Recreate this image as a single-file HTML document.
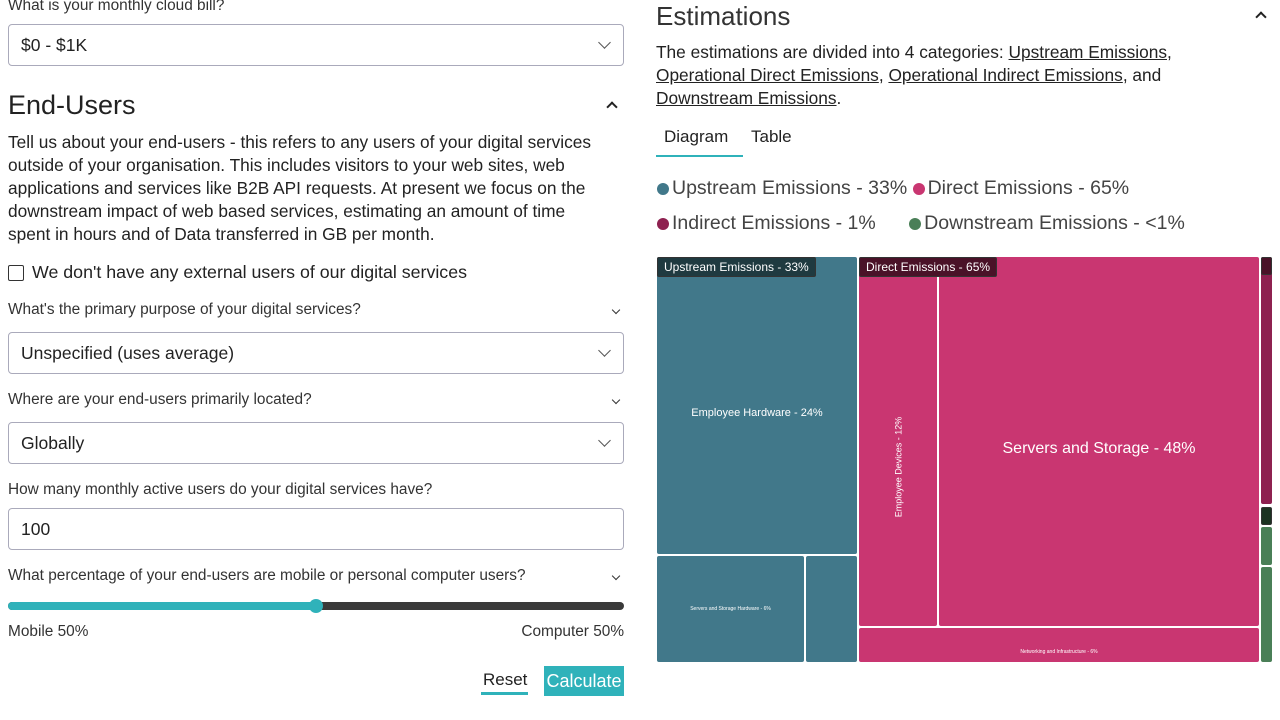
<!DOCTYPE html>
<html><head><meta charset="utf-8"><style>
*{box-sizing:border-box;margin:0;padding:0}
body{width:1280px;height:720px;overflow:hidden;background:#fff;font-family:"Liberation Sans",sans-serif;color:#222;position:relative}
.a{position:absolute;white-space:nowrap}
.t{font-size:17.3px;letter-spacing:0}
.sel{position:absolute;left:8px;width:616px;height:42px;border:1px solid #aab;border-radius:4px;font-size:17.5px;padding:0 12px;line-height:40px}
.chev{position:absolute;right:14px;top:13px;width:9px;height:9px;border-right:1.5px solid #555;border-bottom:1.5px solid #555;transform:rotate(45deg)}
.lab{font-size:15.4px;color:#333}
.smch{position:absolute;left:613px;width:6px;height:6px;border-right:1.5px solid #333;border-bottom:1.5px solid #333;transform:rotate(45deg)}
.up{position:absolute;width:8px;height:8px;border-left:2px solid #222;border-top:2px solid #222;transform:rotate(45deg)}
.b{position:absolute;border-radius:2px;color:#fff;display:flex;align-items:center;justify-content:center;overflow:hidden;white-space:nowrap}
.tag{position:absolute;color:#fff;font-size:12px;padding:0 6px;line-height:18px;border-radius:2px;border:1px solid #333}
.dot{display:inline-block;width:12px;height:12px;border-radius:50%;vertical-align:-1px;margin-right:3px}
u{text-decoration:underline}
</style></head><body>
<div class="a lab" style="left:8px;top:-3px">What is your monthly cloud bill?</div>
<div class="sel" style="top:24px">$0 - $1K<div class="chev"></div></div>
<div class="a" style="left:8px;top:90px;font-size:27px">End-Users</div>
<div class="up" style="left:608px;top:103px"></div>
<div class="a t" style="left:8px;top:131px;line-height:23px;color:#222">Tell us about your end-users - this refers to any users of your digital services<br>outside of your organisation. This includes visitors to your web sites, web<br>applications and services like B2B API requests. At present we focus on the<br>downstream impact of web based services, estimating an amount of time<br>spent in hours and of Data transferred in GB per month.</div>
<div class="a" style="left:8px;top:265px;width:16px;height:16px;border:1.5px solid #333;border-radius:2px"></div>
<div class="a" style="left:32px;top:262px;font-size:17.8px">We don't have any external users of our digital services</div>
<div class="a lab" style="left:8px;top:301px">What's the primary purpose of your digital services?</div>
<div class="smch" style="top:307px"></div>
<div class="sel" style="top:332px">Unspecified (uses average)<div class="chev"></div></div>
<div class="a lab" style="left:8px;top:391px">Where are your end-users primarily located?</div>
<div class="smch" style="top:397px"></div>
<div class="sel" style="top:422px">Globally<div class="chev"></div></div>
<div class="a lab" style="left:8px;top:481px">How many monthly active users do your digital services have?</div>
<div class="sel" style="top:508px">100</div>
<div class="a lab" style="left:8px;top:567px">What percentage of your end-users are mobile or personal computer users?</div>
<div class="smch" style="top:573px"></div>
<div class="a" style="left:8px;top:602px;width:616px;height:8px;border-radius:4px;background:#3a3a3a"></div>
<div class="a" style="left:8px;top:602px;width:308px;height:8px;border-radius:4px;background:#2fb2ba"></div>
<div class="a" style="left:309px;top:599px;width:14px;height:14px;border-radius:50%;background:#2fb2ba"></div>
<div class="a lab" style="left:8px;top:623px">Mobile 50%</div>
<div class="a lab" style="right:656px;top:623px">Computer 50%</div>
<div class="a" style="left:483px;top:670px;font-size:17px">Reset</div>
<div class="a" style="left:481px;top:692px;width:47px;height:3px;background:#2fb2ba"></div>
<div class="a" style="left:544px;top:666px;width:80px;height:30px;background:#2fb2ba;color:#fff;font-size:18px;line-height:30px;text-align:center">Calculate</div>

<div class="a" style="left:656px;top:1px;font-size:26px;color:#333">Estimations</div>
<div class="up" style="left:1257px;top:13px"></div>
<div class="a" style="left:656px;top:41px;line-height:23px;font-size:17.3px">The estimations are divided into 4 categories: <u>Upstream Emissions</u>,<br><u>Operational Direct Emissions</u>, <u>Operational Indirect Emissions</u>, and<br><u>Downstream Emissions</u>.</div>
<div class="a" style="left:664px;top:127px;font-size:17px">Diagram</div>
<div class="a" style="left:751px;top:127px;font-size:17px">Table</div>
<div class="a" style="left:656px;top:155px;width:87px;height:2px;background:#2fb2ba"></div>
<div class="a" style="left:657px;top:177px;font-size:19.5px;color:#444"><span class="dot" style="background:#41788a"></span>Upstream Emissions - 33% <span class="dot" style="background:#c93671"></span>Direct Emissions - 65%</div>
<div class="a" style="left:657px;top:212px;font-size:19.5px;color:#444"><span class="dot" style="background:#8e2150"></span>Indirect Emissions - 1% <span style="display:inline-block;width:28px"></span><span class="dot" style="background:#4a7f57"></span>Downstream Emissions - &lt;1%</div>

<div class="b" style="left:657px;top:257px;width:200px;height:297px;background:#41788a;font-size:11px;padding-top:14px">Employee Hardware - 24%</div>
<div class="b" style="left:657px;top:556px;width:147px;height:106px;background:#41788a;font-size:5px">Servers and Storage Hardware - 6%</div>
<div class="b" style="left:806px;top:556px;width:51px;height:106px;background:#41788a"></div>
<div class="b" style="left:859px;top:257px;width:78px;height:369px;background:#c93671"><span style="transform:rotate(-90deg);font-size:9px;margin-top:50px">Employee Devices - 12%</span></div>
<div class="b" style="left:939px;top:257px;width:320px;height:369px;background:#c93671;font-size:16px;padding-top:14px">Servers and Storage - 48%</div>
<div class="b" style="left:859px;top:628px;width:400px;height:34px;background:#c93671;font-size:5px;padding-top:14px">Networking and Infrastructure - 6%</div>
<div class="b" style="left:1261px;top:257px;width:11px;height:247px;background:#8e2150"></div>
<div class="b" style="left:1261px;top:527px;width:11px;height:38px;background:#4a7f57"></div>
<div class="b" style="left:1261px;top:567px;width:11px;height:95px;background:#4a7f57"></div>
<div class="tag" style="left:657px;top:257px;background:#1f3a40">Upstream Emissions - 33%</div>
<div class="tag" style="left:859px;top:257px;background:#4a1228">Direct Emissions - 65%</div>
<div class="tag" style="left:1261px;top:257px;width:11px;height:18px;background:#4a1228;padding:0"></div>
<div class="tag" style="left:1261px;top:507px;width:11px;height:18px;background:#1c3322;padding:0"></div>
</body></html>
